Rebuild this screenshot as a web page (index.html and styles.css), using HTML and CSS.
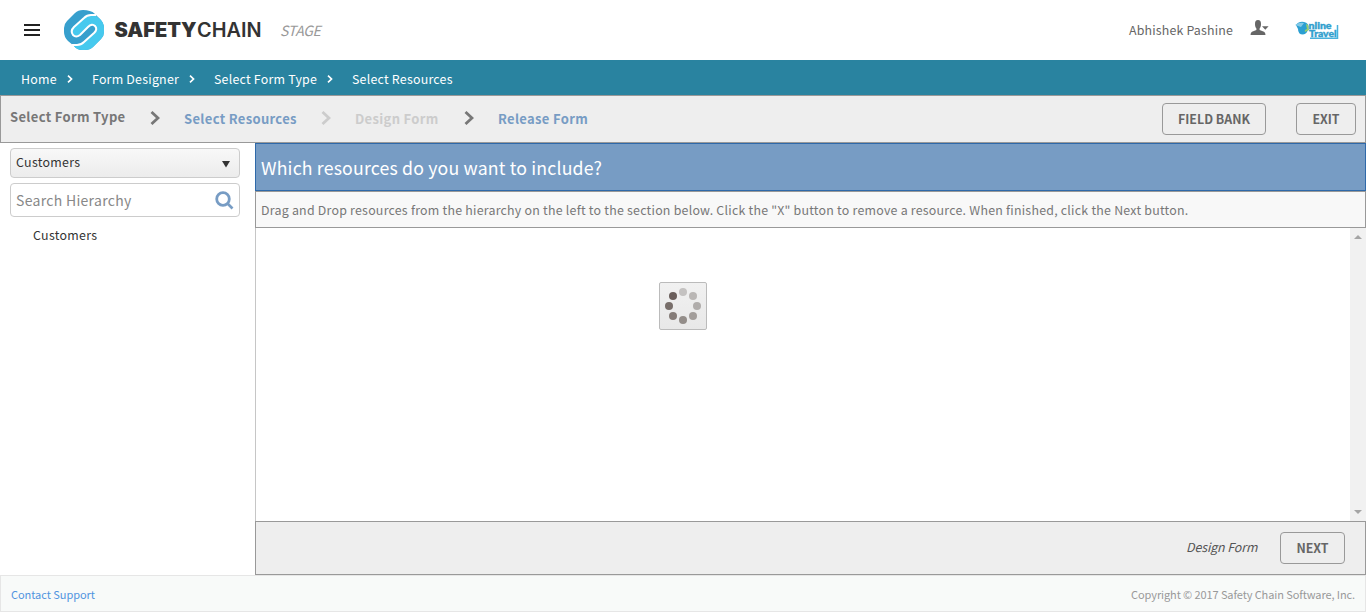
FILE: index.html
```html
<!DOCTYPE html>
<html lang="en">
<head>
<meta charset="utf-8">
<title>SafetyChain - Select Resources</title>
<link rel="stylesheet" href="styles.css">
</head>
<body>
<header class="topbar">
  <svg class="burger" width="16" height="12" viewBox="0 0 16 12"><path d="M0 1h16M0 6h16M0 11h16" stroke="#222" stroke-width="2"/></svg>
  <svg class="logo" width="200" height="40" viewBox="0 0 200 40">
    <path fill="#379fcd" d="M19 0C24 0 28 1 31 4L36 9Q40 13 40 18V22Q40 26 37 29L29 37Q26 40 21 40H18Q13 40 10 36L4 31Q0 27 0 22V18Q0 14 3 11L11 3Q14 0 19 0Z"/>
    <path fill="#46c9ee" d="M31 5H27Q23 5 20 8L10 17Q6 21 9 25Q12 28 16 25L24 17Q28 13 31 16Q34 19 30 23L20 32Q17 35 13 35H9C12 39 15 40 18 40H21Q26 40 29 37L37 29Q40 26 40 22V18Q40 13 36 9Z"/>
    <path fill="none" stroke="#fff" stroke-width="2" d="M32 5H27Q23 5 20 8L10 17Q6 21 9 25Q12 28 16 25L24 17Q28 13 31 16Q34 19 30 23L20 32Q17 35 13 35H8"/>
    <text class="logo-bold" x="50.500" y="27" textLength="82" lengthAdjust="spacingAndGlyphs">SAFETY</text>
    <text class="logo-light" x="133" y="27" textLength="64.500" lengthAdjust="spacingAndGlyphs">CHAIN</text>
  </svg>
  <span class="stage">STAGE</span>
  <span class="user">Abhishek Pashine</span>
  <svg class="user-icon" width="20" height="16" viewBox="0 0 20 16"><path fill="#666" d="M8 0C10.200 0 11 1.600 11 4C11 6 10.400 7.500 9.600 8.500V10L14 11.700Q15.500 12.400 15.500 15H.5Q.5 12.400 2 11.700L6.400 10V8.500C5.600 7.500 5 6 5 4C5 1.600 5.800 0 8 0ZM12 6.300h6.600L15.300 9.800Z"/></svg>
  <svg class="brand" width="44" height="20" viewBox="0 0 44 20">
    <path d="M1 5Q4 1 9 2Q14 3 13.500 8Q12 14.500 8 14.500Q3 14.500 3 9Z" fill="#2b9fd2"/>
    <path d="M0 5Q4 2 9 3L6 7Z" fill="#83c9e6"/>
    <path d="M11 4Q15 5 14 10L10 12Q9 10 12 9Z" fill="#96cf68"/>
    <path d="M15 18.300H42.500V5" stroke="#48b1dc" stroke-width="1.500" fill="none"/>
    <text class="brand-text" x="13.500" y="9" textLength="23" lengthAdjust="spacingAndGlyphs">nline</text>
    <text class="brand-text" x="14" y="17" textLength="27.500" lengthAdjust="spacingAndGlyphs">Travel</text>
  </svg>
</header>
<nav class="crumbs">
  <span class="c1">Home</span><svg class="tick" viewBox="0 0 6 8"><path d="M1 .7L4.500 4L1 7.300"/></svg>
  <span class="c2">Form Designer</span><svg class="tick" viewBox="0 0 6 8"><path d="M1 .7L4.500 4L1 7.300"/></svg>
  <span class="c3">Select Form Type</span><svg class="tick" viewBox="0 0 6 8"><path d="M1 .7L4.500 4L1 7.300"/></svg>
  <span class="c4">Select Resources</span>
</nav>
<section class="steps">
  <span class="step s1">Select Form Type</span><svg class="chev" viewBox="0 0 10 14"><path d="M1.500 1L8 7L1.500 13"/></svg>
  <span class="step s2">Select Resources</span><svg class="chev faded" viewBox="0 0 10 14"><path d="M1.500 1L8 7L1.500 13"/></svg>
  <span class="step s3">Design Form</span><svg class="chev" viewBox="0 0 10 14"><path d="M1.500 1L8 7L1.500 13"/></svg>
  <span class="step s4">Release Form</span>
  <button class="btn bank"><span>FIELD BANK</span></button>
  <button class="btn exit"><span>EXIT</span></button>
</section>
<main class="work">
  <aside class="side">
    <div class="select"><span>Customers</span><svg width="8" height="7" viewBox="0 0 8 7"><path d="M0 0H8L4 6.500Z" fill="#333"/></svg></div>
    <div class="search"><span>Search Hierarchy</span><svg width="19" height="19" viewBox="0 0 19 19" fill="none" stroke="#779cc4"><circle cx="8" cy="8" r="6.300" stroke-width="2.800"/><path d="M12.500 12.500L17.500 17.500" stroke-width="2.600"/></svg></div>
    <div class="node"><span>Customers</span></div>
  </aside>
  <section class="panel">
    <h1 class="title"><span>Which resources do you want to include?</span></h1>
    <p class="desc"><span>Drag and Drop resources from the hierarchy on the left to the section below. Click the "X" button to remove a resource. When finished, click the Next button.</span></p>
    <div class="drop">
      <div class="scroll"><svg width="8" height="4" viewBox="0 0 8 4"><path d="M0 4L4 0L8 4Z"/></svg><svg width="8" height="4" viewBox="0 0 8 4"><path d="M0 0L4 4L8 0Z"/></svg></div>
    </div>
    <div class="actions"><span class="next-name">Design Form</span><button class="btn next"><span>NEXT</span></button></div>
  </section>
</main>
<footer class="foot"><a class="support">Contact Support</a><span class="copy">Copyright © 2017 Safety Chain Software, Inc.</span></footer>
<div class="loader">
  <svg width="46" height="46" viewBox="0 0 46 46">
    <circle cx="23" cy="9" r="4" fill="#c4c2c1"/><circle cx="33" cy="13" r="4" fill="#bab7b5"/><circle cx="37" cy="23" r="4" fill="#b0adab"/><circle cx="33" cy="33" r="4" fill="#a39e9b"/><circle cx="23" cy="37" r="4" fill="#938d89"/><circle cx="13" cy="33" r="4" fill="#857c78"/><circle cx="9" cy="23" r="4" fill="#786e6a"/><circle cx="13" cy="13" r="4" fill="#6a5e5b"/>
  </svg>
</div>
</body>
</html>
```
FILE: styles.css
```css
* { box-sizing: border-box; }
body { margin: 0; width: 1366px; height: 612px; overflow: hidden; background: #fff; font-family: "Noto Sans CJK SC", "Noto Sans", sans-serif; font-size: 12.4px; line-height: 20px; color: #333; display: flex; flex-direction: column; }
span, a { white-space: nowrap; }
svg { flex: none; display: block; }
.topbar { height: 60px; display: flex; align-items: center; padding-left: 24px; flex: none; }
.logo { margin-left: 24px; }
.logo-bold, .logo-light { font-family: Inter, sans-serif; font-size: 19.500px; font-weight: 900; fill: #333; }
.logo-light { font-weight: 600; }
.stage { margin-left: 16px; width: 60px; font-style: italic; font-size: 14px; letter-spacing: -.3px; color: #999; }
.user { margin-left: auto; width: 104px; letter-spacing: .17px; color: #666; }
.user-icon { margin: 0 0 4px 17px; }
.brand { margin: 0 27px 0 25px; }
.brand-text { font-family: Lato, sans-serif; font-weight: 900; font-size: 9.500px; fill: #329fce; stroke: #329fce; stroke-width: .4px; }
.crumbs { height: 35px; background: #2983a0; color: #fff; display: flex; align-items: center; padding: 3px 0 0 21px; letter-spacing: .23px; flex: none; }
.tick { width: 6px; height: 8px; fill: none; stroke: #fff; stroke-width: 1.700; }
.c1 { width: 46px; }
.c2 { width: 97px; margin-left: 19px; }
.c3 { width: 113px; margin-left: 19px; }
.c4 { margin-left: 19px; }
.steps { height: 48px; border: 1px solid #999; background: #eee; display: flex; align-items: center; padding-left: 9px; padding-right: 9px; flex: none; }
.step { font-weight: 700; font-size: 13px; letter-spacing: .33px; color: #779cc4; }
.chev { width: 10px; height: 14px; fill: none; stroke: #777; stroke-width: 2.800; margin-bottom: 2px; }
.chev.faded { stroke: #ccc; }
.s1 { color: #777; width: 140px; margin-bottom: 4px; }
.s2 { width: 137px; margin-left: 24px; }
.s3 { width: 109px; margin-left: 24px; color: #ccc; }
.s4 { margin-left: 24px; }
.btn { height: 32px; border: 1px solid #999; border-radius: 4px; background: #eee; color: #666; font: 700 12.400px "Noto Sans CJK SC", sans-serif; padding: 0; }
.bank { width: 104px; margin-left: auto; }
.exit { width: 60px; margin-left: 30px; }
.work { height: 432px; display: flex; flex: none; }
.side { width: 255px; padding: 5px 15px 0 10px; letter-spacing: .3px; }
.select { height: 30px; border: 1px solid #ccc; border-radius: 4px; background: linear-gradient(#f8f8f8, #ececec); display: flex; align-items: center; justify-content: space-between; padding: 0 9px 2px 5px; }
.select svg { margin-top: 5px; }
.search { height: 34px; margin-top: 5px; border: 1px solid #ccc; border-radius: 4px; display: flex; align-items: center; justify-content: space-between; padding: 0 5px; font-size: 14px; color: #888; }
.node { padding: 8px 0 0 23px; }
.panel { width: 1111px; display: flex; flex-direction: column; }
.title { margin: 0; height: 48px; border: 1px solid #2f69a9; background: #779cc4; color: #fff; font-size: 17.700px; font-weight: 400; letter-spacing: .17px; padding: 0 5px; display: flex; align-items: center; }
.desc { margin: 0; height: 37px; border: 1px solid #999; background: #f8f8f8; color: #777; letter-spacing: .23px; padding: 0 5px; display: flex; align-items: center; }
.drop { height: 293px; border-left: 1px solid #c6c6c6; display: flex; justify-content: flex-end; }
.scroll { width: 16px; background: #f1f1f1; display: flex; flex-direction: column; justify-content: space-between; align-items: center; padding: 7px 0 7px; fill: #a5a5a5; }
.actions { height: 54px; border: 1px solid #999; background: #eee; display: flex; align-items: center; padding-right: 20px; }
.next-name { margin: 0 0 2px auto; width: 72px; font-style: italic; letter-spacing: -.1px; color: #555; }
.next { width: 65px; margin-left: 22px; }
.foot { height: 37px; border: 1px solid #e6e6e6; background: #f8faf9; display: flex; align-items: center; justify-content: space-between; padding: 1px 10px 0; font-size: 11px; color: #999; }
.support { color: #5194df; letter-spacing: -.04px; }
.copy { letter-spacing: -.1px; }
.loader { position: absolute; left: 659px; top: 282px; width: 48px; height: 48px; border: 1px solid #bbb; border-radius: 2px; background: linear-gradient(#f1f1f1, #e8e8e8); }
```
